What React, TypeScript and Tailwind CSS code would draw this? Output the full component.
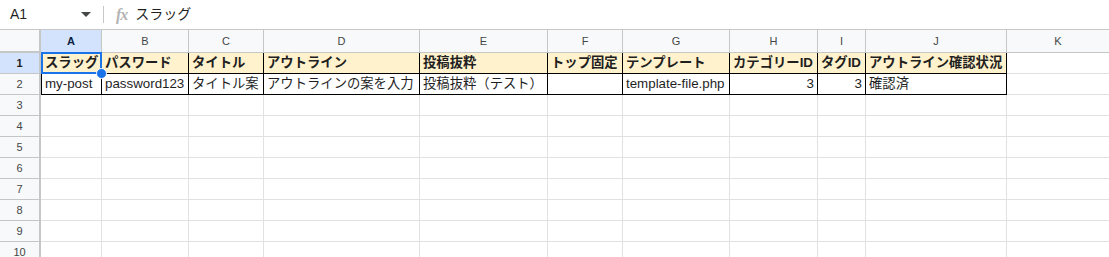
import React from 'react';

const COLS = [
  { key: 'A', w: 61 },
  { key: 'B', w: 87 },
  { key: 'C', w: 75 },
  { key: 'D', w: 156 },
  { key: 'E', w: 128 },
  { key: 'F', w: 75 },
  { key: 'G', w: 107 },
  { key: 'H', w: 88 },
  { key: 'I', w: 48 },
  { key: 'J', w: 141 },
  { key: 'K', w: 103 },
];

const HEADERS = ['スラッグ', 'パスワード', 'タイトル', 'アウトライン', '投稿抜粋', 'トップ固定', 'テンプレート', 'カテゴリーID', 'タグID', 'アウトライン確認状況', ''];
const ROW2 = ['my-post', 'password123', 'タイトル案', 'アウトラインの案を入力', '投稿抜粋（テスト）', '', 'template-file.php', '3', '3', '確認済', ''];

const font = "font-['Liberation_Sans','Noto_Sans_CJK_JP',sans-serif]";

const App: React.FC = () => {
  const emptyRows = [3, 4, 5, 6, 7, 8, 9, 10];

  return (
    <div className={`w-[1109px] h-[257px] overflow-hidden bg-white text-[#1f1f1f] ${font}`}>
      {/* Name box / formula bar */}
      <div className="h-[30px] flex items-center border-b border-[#c7c7c7]">
        <div className="w-[103px] flex items-center pl-[10px] pr-[12px] text-[14px]">
          <span className="flex-1">A1</span>
          <span className="w-0 h-0 border-l-[5px] border-r-[5px] border-t-[5px] border-l-transparent border-r-transparent border-t-[#444746]" />
        </div>
        <div className="w-px h-[17px] bg-[#c7c7c7]" />
        <span className="ml-[12px] italic text-[16px] font-bold text-[#b4b4b4] font-['Liberation_Serif',serif] tracking-[-1px]">fx</span>
        <span className="ml-[8px] text-[14px]">スラッグ</span>
      </div>

      {/* Column headers */}
      <div className="flex h-[23px]">
        <div className="w-[41px] shrink-0 bg-[#f8f9fa] border-r-2 border-b-2 border-[#c4c7c5]" />
        {COLS.map((c) => (
          <div
            key={c.key}
            style={{ width: c.w }}
            className={`shrink-0 flex items-center justify-center text-[11px] border-r border-b border-[#c4c7c5] ${
              c.key === 'A' ? 'bg-[#d3e3fd] font-bold text-[#0b1f44]' : 'bg-[#f8f9fa] text-[#444746]'
            }`}
          >
            {c.key}
          </div>
        ))}
      </div>

      {/* Row 1 */}
      <div className="flex h-[21px]">
        <div className="w-[41px] shrink-0 flex items-center justify-center text-[11px] font-bold bg-[#d3e3fd] border-r-2 border-b border-[#c4c7c5]">1</div>
        {COLS.map((c, i) => {
          const inRange = i < 10;
          return (
            <div
              key={c.key}
              style={{ width: c.w }}
              className={`relative shrink-0 flex items-center px-[3px] text-[13.33px] font-bold whitespace-nowrap overflow-visible ${
                inRange ? 'bg-[#fff2cc] border-r border-b border-black' : 'border-r border-b border-[#e1e1e1]'
              } ${i === 0 ? 'border-l border-l-black' : ''}`}
            >
              {HEADERS[i]}
              {i === 0 && (
                <>
                  <div className="absolute -left-px -top-px -right-px -bottom-px border-2 border-[#1a73e8]" />
                  <div className="absolute -right-[6px] -bottom-[6px] w-[11px] h-[11px] rounded-full bg-[#1a73e8] border border-white z-10" />
                </>
              )}
            </div>
          );
        })}
      </div>

      {/* Row 2 */}
      <div className="flex h-[21px]">
        <div className="w-[41px] shrink-0 flex items-center justify-center text-[11px] text-[#444746] bg-[#f8f9fa] border-r-2 border-b border-[#c4c7c5]">2</div>
        {COLS.map((c, i) => {
          const inRange = i < 10;
          const numeric = i === 7 || i === 8;
          return (
            <div
              key={c.key}
              style={{ width: c.w }}
              className={`shrink-0 flex items-center px-[3px] text-[13.33px] whitespace-nowrap ${
                numeric ? 'justify-end' : ''
              } ${inRange ? 'border-r border-b border-black' : 'border-r border-b border-[#e1e1e1]'} ${
                i === 0 ? 'border-l border-l-black' : ''
              }`}
            >
              {ROW2[i]}
            </div>
          );
        })}
      </div>

      {/* Empty rows */}
      {emptyRows.map((r) => (
        <div key={r} className="flex h-[21px]">
          <div className="w-[41px] shrink-0 flex items-center justify-center text-[11px] text-[#444746] bg-[#f8f9fa] border-r-2 border-b border-[#c4c7c5]">
            {r}
          </div>
          {COLS.map((c) => (
            <div key={c.key} style={{ width: c.w }} className="shrink-0 border-r border-b border-[#e1e1e1]" />
          ))}
        </div>
      ))}
    </div>
  );
};

export default App;
